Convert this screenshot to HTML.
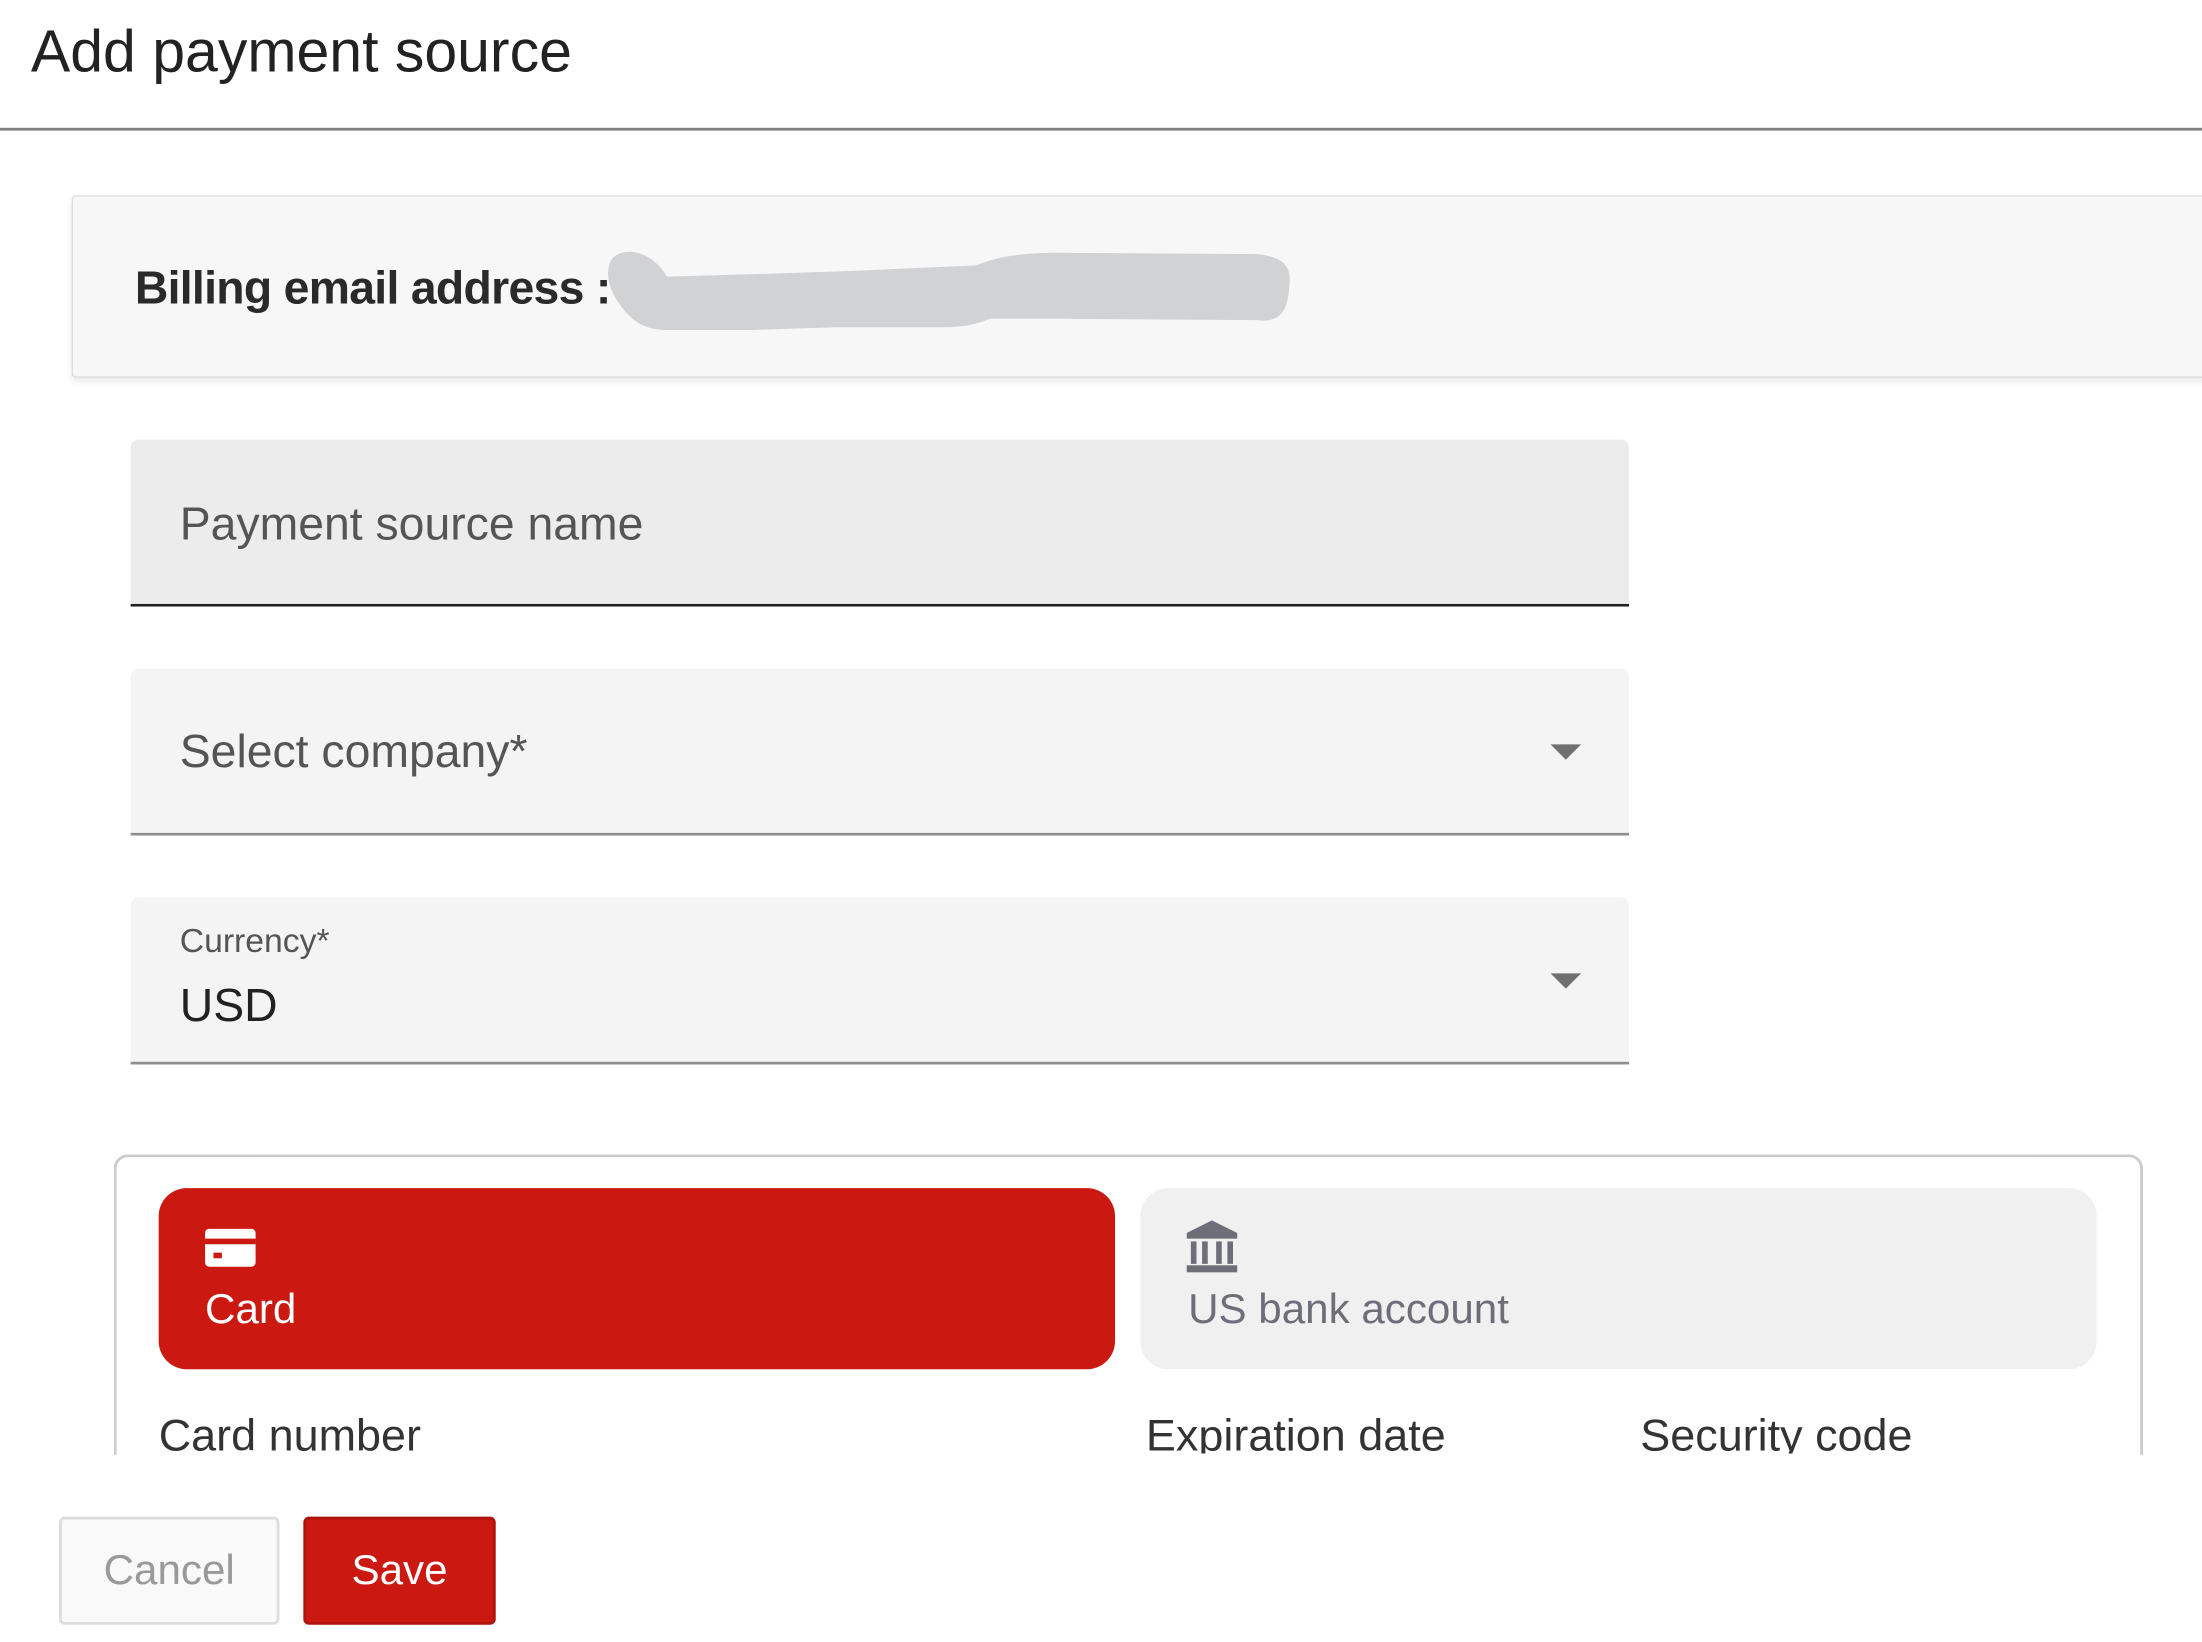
<!DOCTYPE html>
<html><head><meta charset="utf-8">
<style>
html,body{margin:0;padding:0;background:#fff;overflow:hidden;width:2202px;height:1641px}
#w{position:absolute;left:0;top:0;width:1568px;height:1169px;transform:scale(1.40433);transform-origin:0 0;font-family:"Liberation Sans",sans-serif;overflow:hidden}
.a{position:absolute}
.t{white-space:nowrap;line-height:1}
</style></head><body><div id="w">
<div class="a t" style="left:22px;top:16px;font-size:42px;color:#222">Add payment source</div>
<div class="a" style="left:0;top:91px;width:1568px;height:2px;background:#808080"></div>

<div class="a" style="left:51px;top:139px;width:1530px;height:128px;background:#f7f7f7;border:1px solid #ddd;border-radius:3px;box-shadow:0 3px 5px rgba(0,0,0,0.08)"></div>
<div class="a t" style="left:96px;top:188px;font-size:33px;font-weight:bold;color:#2a2a2a;letter-spacing:-0.5px">Billing email address :</div>
<svg class="a" style="left:425px;top:175px" width="500" height="62"><path d="M12 8 C22 0 40 5 50 22 L120 20 L180 18 L270 14 C285 8 300 5 330 5 L470 6 C490 8 495 15 493 30 C492 48 485 55 470 53 L330 52 L280 52 C270 56 260 58 250 58 L170 58 L110 60 L50 60 C35 60 25 55 15 40 C8 30 5 15 12 8Z" fill="#d1d2d4"/></svg>

<div class="a" style="left:93px;top:313px;width:1067px;height:117px;background:#ececec;border-radius:6px 6px 0 0;border-bottom:2px solid #222"></div>
<div class="a t" style="left:128px;top:356px;font-size:33px;color:#555">Payment source name</div>

<div class="a" style="left:93px;top:476px;width:1067px;height:117px;background:#f4f4f4;border-radius:6px 6px 0 0;border-bottom:2px solid #8f8f8f"></div>
<div class="a t" style="left:128px;top:518px;font-size:33px;color:#555">Select company*</div>
<svg class="a" style="left:1104px;top:530px" width="24" height="12"><path d="M0 0H22L11 11Z" fill="#707070"/></svg>

<div class="a" style="left:93px;top:639px;width:1067px;height:117px;background:#f4f4f4;border-radius:6px 6px 0 0;border-bottom:2px solid #8f8f8f"></div>
<div class="a t" style="left:128px;top:659px;font-size:24px;color:#555">Currency*</div>
<div class="a t" style="left:128px;top:699px;font-size:33px;color:#222">USD</div>
<svg class="a" style="left:1104px;top:693px" width="24" height="12"><path d="M0 0H22L11 11Z" fill="#707070"/></svg>

<div class="a" style="left:81px;top:822px;width:1441px;height:240px;border:2px solid #ccc;border-radius:10px 10px 0 0;border-bottom:none"></div>
<div class="a" style="left:0;top:1036px;width:1568px;height:133px;background:#fff"></div>

<div class="a" style="left:113px;top:846px;width:681px;height:129px;background:#cb1811;border-radius:20px"></div>
<svg class="a" style="left:146px;top:875px" width="37" height="28"><rect x="0" y="0" width="36" height="27" rx="3" fill="#fff"/><rect x="0" y="7" width="36" height="4" fill="#cb1811"/><rect x="6" y="17" width="6" height="4" fill="#cb1811"/></svg>
<div class="a t" style="left:146px;top:918px;font-size:30px;color:#fff">Card</div>

<div class="a" style="left:812px;top:846px;width:681px;height:129px;background:#f0f0f0;border-radius:20px"></div>
<svg class="a" style="left:845px;top:869px" width="38" height="38"><path d="M18 0L36 9V13H0V9Z" fill="#6e6e78"/><rect x="3" y="15" width="4" height="16" fill="#6e6e78"/><rect x="11" y="15" width="4" height="16" fill="#6e6e78"/><rect x="21" y="15" width="4" height="16" fill="#6e6e78"/><rect x="29" y="15" width="4" height="16" fill="#6e6e78"/><rect x="0" y="32" width="36" height="5" fill="#6e6e78"/></svg>
<div class="a t" style="left:846px;top:918px;font-size:30px;color:#6e6e78">US bank account</div>

<div class="a" style="left:0;top:990px;width:1568px;height:45px;overflow:hidden">
<div class="a t" style="left:113px;top:16px;font-size:32px;color:#333">Card number</div>
<div class="a t" style="left:816px;top:16px;font-size:32px;color:#333">Expiration date</div>
<div class="a t" style="left:1168px;top:16px;font-size:32px;color:#333">Security code</div>
</div>

<div class="a" style="left:42px;top:1080px;width:153px;height:73px;background:#f9f9f9;border:2px solid #ddd;border-radius:4px"></div>
<div class="a t" style="left:42px;top:1104px;width:157px;text-align:center;font-size:30px;color:#999">Cancel</div>
<div class="a" style="left:216px;top:1080px;width:133px;height:73px;background:#cb1811;border:2px solid #b0120c;border-radius:4px"></div>
<div class="a t" style="left:216px;top:1104px;width:137px;text-align:center;font-size:30px;color:#fff">Save</div>
</div></body></html>
